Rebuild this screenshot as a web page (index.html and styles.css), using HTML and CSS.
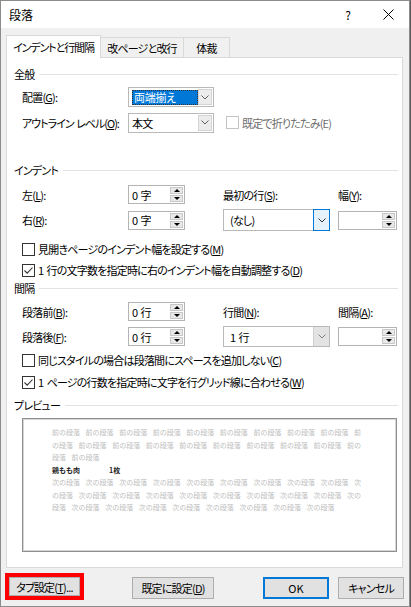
FILE: index.html
```html
<!DOCTYPE html>
<html lang="ja">
<head>
<meta charset="utf-8">
<title>段落</title>
<link rel="stylesheet" href="styles.css">
</head>
<body>
<div class="window">
  <div class="titlebar">
    <span class="title">段落</span>
    <span class="help">?</span>
    <span class="close"><svg width="11" height="11" viewBox="0 0 11 11"><path d="M0.5 0.5 L10.5 10.5 M10.5 0.5 L0.5 10.5" stroke="#000" stroke-width="1" fill="none"/></svg></span>
  </div>

  <div class="tabs">
    <div class="tab tab-indent active">インデントと行間隔</div>
    <div class="tab tab-break">改ページと改行</div>
    <div class="tab tab-style">体裁</div>
  </div>

  <div class="panel">
    <div class="heading">全般</div>
    <div class="row gen-row1">
      <span class="lbl c1">配置(<u>G</u>):</span>
      <div class="combo combo-gen">
        <span class="combo-text"><span class="sel">両端揃え</span></span>
        <span class="combo-btn"><svg width="8" height="5" viewBox="0 0 8 5"><path d="M0.5 0.5 L4 4 L7.5 0.5" stroke="#606060" fill="none"/></svg></span>
      </div>
    </div>
    <div class="row gen-row2">
      <span class="lbl c1 outline-lbl">アウトライン レベル(<u>O</u>):</span>
      <div class="combo combo-gen">
        <span class="combo-text">本文</span>
        <span class="combo-btn"><svg width="8" height="5" viewBox="0 0 8 5"><path d="M0.5 0.5 L4 4 L7.5 0.5" stroke="#606060" fill="none"/></svg></span>
      </div>
      <span class="cb disabled"></span>
      <span class="cb-label disabled-text">既定で折りたたみ(E)</span>
    </div>

    <div class="heading h-indent">インデント</div>
    <div class="row r19 ind-row1">
      <span class="lbl c1">左(<u>L</u>):</span>
      <div class="spin"><span class="spin-text">0 字</span><span class="spin-btns"><span class="sb up"></span><span class="sb down"></span></span></div>
      <span class="lbl c3">最初の行(<u>S</u>):</span>
      <span class="lbl c4">幅(<u>Y</u>):</span>
    </div>
    <div class="row r22 ind-row2">
      <span class="lbl c1">右(<u>R</u>):</span>
      <div class="spin"><span class="spin-text">0 字</span><span class="spin-btns"><span class="sb up"></span><span class="sb down"></span></span></div>
      <div class="combo combo-wide c3 focused">
        <span class="combo-text">(なし)</span>
        <span class="combo-btn"><svg width="8" height="5" viewBox="0 0 8 5"><path d="M0.5 0.5 L4 4 L7.5 0.5" stroke="#333" fill="none"/></svg></span>
      </div>
      <div class="spin spin-w c4"><span class="spin-text"></span><span class="spin-btns"><span class="sb up"></span><span class="sb down"></span></span></div>
    </div>
    <div class="row cbrow cb1">
      <span class="cb"></span>
      <span class="cb-label">見開きページのインデント幅を設定する(<u>M</u>)</span>
    </div>
    <div class="row cbrow cb2">
      <span class="cb"><svg width="11" height="11" viewBox="0 0 11 11"><path d="M1.5 5.5 L4.2 8.2 L9.5 2.5" stroke="#333" stroke-width="1.1" fill="none"/></svg></span>
      <span class="cb-label"><span class="num">1 </span>行の文字数を指定時に右のインデント幅を自動調整する(<u>D</u>)</span>
    </div>

    <div class="heading h-space">間隔</div>
    <div class="row r19 sp-row1">
      <span class="lbl c1">段落前(<u>B</u>):</span>
      <div class="spin"><span class="spin-text">0 行</span><span class="spin-btns"><span class="sb up"></span><span class="sb down"></span></span></div>
      <span class="lbl c3">行間(<u>N</u>):</span>
      <span class="lbl c4">間隔(<u>A</u>):</span>
    </div>
    <div class="row r21 sp-row2">
      <span class="lbl c1">段落後(<u>F</u>):</span>
      <div class="spin"><span class="spin-text">0 行</span><span class="spin-btns"><span class="sb up"></span><span class="sb down"></span></span></div>
      <div class="combo combo-wide c3">
        <span class="combo-text plain">1 行</span>
        <span class="combo-btn"><svg width="8" height="5" viewBox="0 0 8 5"><path d="M0.5 0.5 L4 4 L7.5 0.5" stroke="#808080" fill="none"/></svg></span>
      </div>
      <div class="spin spin-w c4"><span class="spin-text"></span><span class="spin-btns"><span class="sb up"></span><span class="sb down"></span></span></div>
    </div>
    <div class="row cbrow cb3">
      <span class="cb"></span>
      <span class="cb-label">同じスタイルの場合は段落間にスペースを追加しない(<u>C</u>)</span>
    </div>
    <div class="row cbrow cb4">
      <span class="cb"><svg width="11" height="11" viewBox="0 0 11 11"><path d="M1.5 5.5 L4.2 8.2 L9.5 2.5" stroke="#333" stroke-width="1.1" fill="none"/></svg></span>
      <span class="cb-label"><span class="num">1 </span>ページの行数を指定時に文字を行グリッド線に合わせる(<u>W</u>)</span>
    </div>

    <div class="heading h-preview">プレビュー</div>
    <div class="preview">
      <div class="pl">前の段落 前の段落 前の段落 前の段落 前の段落 前の段落 前の段落 前の段落 前の段落 前</div>
      <div class="pl">の段落 前の段落 前の段落 前の段落 前の段落 前の段落 前の段落 前の段落 前の段落 前の</div>
      <div class="pl">段落 前の段落</div>
      <div class="pl cur"><span class="tabstop">鶏もも肉</span>1枚</div>
      <div class="pl">次の段落 次の段落 次の段落 次の段落 次の段落 次の段落 次の段落 次の段落 次の段落 次</div>
      <div class="pl">の段落 次の段落 次の段落 次の段落 次の段落 次の段落 次の段落 次の段落 次の段落 次の</div>
      <div class="pl">段落 次の段落 次の段落 次の段落 次の段落 次の段落 次の段落 次の段落 次の段落</div>
    </div>
  </div>

  <div class="buttons">
    <div class="redbox"><span class="btn btn-tab">タブ設定(<u>T</u>)...</span></div>
    <span class="btn btn-default">既定に設定(<u>D</u>)</span>
    <span class="btn btn-ok">OK</span>
    <span class="btn btn-cancel">キャンセル</span>
  </div>
</div>
</body>
</html>
```

FILE: styles.css
```css
* { box-sizing: border-box; }

html { background: #5a5a5a; }

body {
  margin: 0;
  font-family: "Noto Sans CJK JP", "Noto Sans", sans-serif;
  font-size: 11px;
  letter-spacing: -0.8px;
  word-spacing: 2px;
  color: #000;
  font-feature-settings: "palt" 1;
  line-height: 16px;
}

u { text-underline-offset: 1px; }
.num { letter-spacing: 0; word-spacing: 0; }

.window {
  width: 410px;
  height: 607px;
  background: #f0f0f0;
  border: 1px solid #8c8c8c;
  display: flex;
  flex-direction: column;
}

/* title bar */
.titlebar {
  height: 27px;
  background: #fff;
  display: flex;
  align-items: center;
  padding-left: 8px;
  flex-shrink: 0;
  font-size: 12px;
  letter-spacing: 0;
}
.title { flex: 1; }
.help { width: 14px; text-align: center; margin-right: 18px; }
.close {
  width: 30px;
  margin-right: 6px;
  display: flex;
  justify-content: center;
  align-items: center;
}

/* tabs */
.tabs {
  display: flex;
  align-items: flex-start;
  margin: 7px 0 -1px 5px;
  height: 23px;
  flex-shrink: 0;
}
.tab {
  height: 20px;
  margin-top: 2px;
  border: 1px solid #d9d9d9;
  border-bottom: none;
  background: #f0f0f0;
  display: flex;
  align-items: center;
  justify-content: center;
  white-space: nowrap;
}
.tab.active {
  height: 23px;
  margin-top: 0;
  background: #fff;
  position: relative;
  z-index: 1;
}
.tab-indent { width: 95px; letter-spacing: -1.1px; }
.tab-break { width: 84px; margin-left: -1px; }
.tab-style { width: 47px; margin-left: -1px; }

/* panel */
.panel {
  margin-left: 5px;
  width: 397px;
  height: 511px;
  background: #fff;
  border: 1px solid #d9d9d9;
  padding: 8px 4px 0 7px;
  flex-shrink: 0;
}

.heading {
  height: 16px;
  display: flex;
  align-items: center;
}
.heading::after {
  content: "";
  flex: 1;
  margin-left: 5px;
  border-top: 1px solid #e3e3e3;
}
.h-indent { margin-top: 29px; }
.h-space { margin-top: 2px; }
.h-preview { margin-top: 7px; }

.row {
  display: flex;
  align-items: center;
  margin-left: 8px;
}
.gen-row1 { height: 20px; margin-top: 5px; }
.gen-row2 { height: 21px; margin-top: 5px; }
.r19 { height: 19px; }
.r21 { height: 21px; }
.r22 { height: 22px; }
.ind-row1 { margin-top: 7px; }
.ind-row2 { margin-top: 5px; }
.cbrow { height: 16px; }
.cb1 { margin-top: 10px; }
.cb2 { margin-top: 5px; }
.sp-row1 { margin-top: 6px; }
.sp-row2 { margin-top: 5px; }
.cb3 { margin-top: 5px; }
.cb4 { margin-top: 6px; }

.lbl { white-space: nowrap; }
.c1 { width: 106px; flex-shrink: 0; }
.outline-lbl { letter-spacing: -1px; word-spacing: 1px; }
.c3 { width: 107px; margin-left: 38px; flex-shrink: 0; }
.c4 { width: 59px; margin-left: 8px; flex-shrink: 0; }

/* combo boxes */
.combo {
  display: flex;
  align-items: stretch;
  border: 1px solid #b9b9b9;
  background: #fff;
}
.combo-gen { width: 86px; height: 20px; padding: 1px; flex-shrink: 0; }
.combo-gen .combo-btn {
  width: 14px;
  background: #ececec;
  border: 1px solid #d4d4d4;
}
.combo-wide { height: 21px; }
.ind-row2 .combo-wide { height: 22px; }
.combo-text {
  flex: 1;
  display: flex;
  align-items: center;
  padding-left: 2px;
  white-space: pre;
}
.combo-wide .combo-text { padding-left: 6px; }
.combo-text.plain { letter-spacing: 0; word-spacing: 0; }
.combo-btn {
  width: 16px;
  display: flex;
  align-items: center;
  justify-content: center;
  background: #e3e3e3;
  border-left: 1px solid #cfcfcf;
}
.focused .combo-btn {
  background: #e5f1fb;
  border: 1px solid #0078d7;
  margin: -1px -1px -1px 0;
  width: 17px;
}
.sel {
  background: #0078d7;
  color: #fff;
  outline: 1px dotted #333;
  outline-offset: -1px;
  padding: 0 2px;
  width: 66px;
  height: 15px;
  display: flex;
  align-items: center;
  letter-spacing: -0.3px;
}

/* spin boxes */
.spin {
  width: 57px;
  height: 19px;
  border: 1px solid #b4b4b4;
  background: #fff;
  display: flex;
  flex-shrink: 0;
}
.spin-w { width: 59px; }
.spin-text {
  flex: 1;
  padding-left: 3px;
  display: flex;
  align-items: center;
  white-space: pre;
  letter-spacing: 0;
  word-spacing: 0;
}
.spin-btns {
  width: 14px;
  display: flex;
  flex-direction: column;
  padding: 1px 1px 1px 0;
  gap: 1px;
}
.sb {
  flex: 1;
  background: #e8e8e8;
  border: 1px solid #c8c8c8;
  display: flex;
  align-items: center;
  justify-content: center;
}
.sb::after {
  content: "";
  width: 0;
  height: 0;
  border-left: 3px solid transparent;
  border-right: 3px solid transparent;
}
.up::after { border-bottom: 3px solid #000; }
.down::after { border-top: 3px solid #000; }

/* checkboxes */
.cb {
  width: 13px;
  height: 13px;
  border: 1px solid #333;
  background: #fff;
  flex-shrink: 0;
  display: flex;
  align-items: center;
  justify-content: center;
}
.cb.disabled { border-color: #c4c4c4; margin-left: 12px; }
.cb-label { margin-left: 3px; white-space: pre; }
.disabled-text { color: #6d6d6d; }

/* preview */
.preview {
  margin: 5px 0 0 8px;
  width: 375px;
  height: 134px;
  border: 1px solid #8f8f8f;
  box-shadow: inset 0 0 0 1px #d6d6d6;
  padding: 7px 0 0 29px;
  font-size: 7px;
  line-height: 12.5px;
  color: #bdbdbd;
  font-feature-settings: normal;
  letter-spacing: 0;
  word-spacing: 4px;
}
.pl { white-space: nowrap; height: 12.5px; }
.cur { color: #222; font-weight: bold; }
.tabstop { display: inline-block; width: 57px; }

/* bottom buttons */
.buttons {
  display: flex;
  align-items: flex-start;
  padding-left: 4px;
  margin-top: 5px;
}
.redbox {
  width: 79px;
  height: 27px;
  border: 4px solid #ff0000;
  display: flex;
}
.btn {
  background: #e1e1e1;
  border: 1px solid #adadad;
  display: flex;
  align-items: center;
  justify-content: center;
  white-space: nowrap;
  height: 22px;
  margin-top: 4px;
}
.btn-tab { flex: 1; height: auto; margin-top: 0; }
.btn-default { width: 82px; margin-left: 48px; }
.btn-ok {
  width: 66px;
  margin-left: 49px;
  border-color: #0078d7;
  box-shadow: inset 0 0 0 1px #0078d7;
  letter-spacing: 0;
}
.btn-cancel { width: 66px; margin-left: 9px; }
```
